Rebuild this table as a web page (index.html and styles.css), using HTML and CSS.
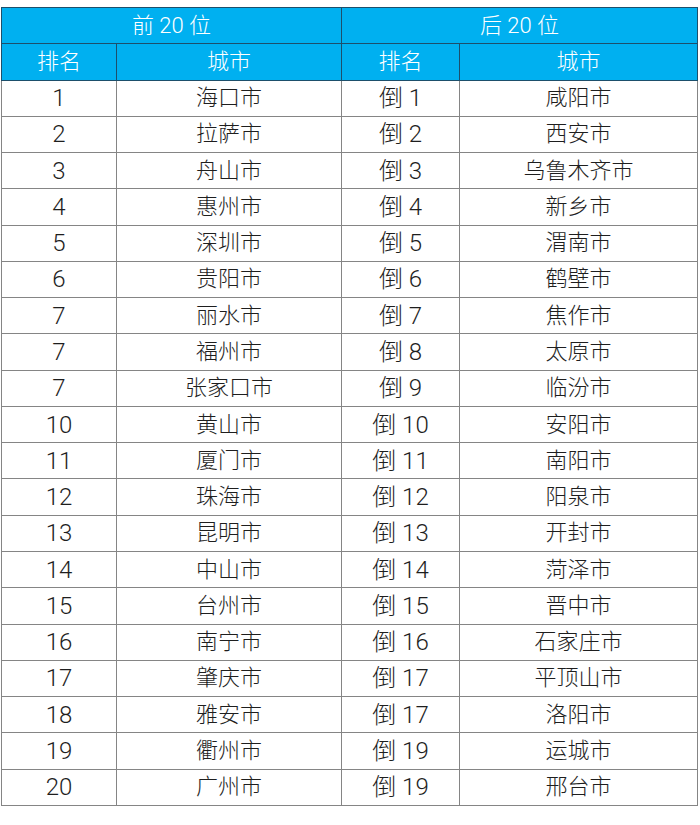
FILE: index.html
```html
<!DOCTYPE html>
<html lang="zh">
<head>
<meta charset="utf-8">
<link rel="stylesheet" href="styles.css">
</head>
<body>
<table class="rank">
<colgroup><col class="c1"><col class="c2"><col class="c3"><col class="c4"></colgroup>
<thead>
<tr class="h1"><th colspan="2">前 20 位</th><th colspan="2">后 20 位</th></tr>
<tr class="h2"><th>排名</th><th>城市</th><th>排名</th><th>城市</th></tr>
</thead>
<tbody>
<tr><td class="n">1</td><td>海口市</td><td class="n">倒 1</td><td>咸阳市</td></tr>
<tr><td class="n">2</td><td>拉萨市</td><td class="n">倒 2</td><td>西安市</td></tr>
<tr><td class="n">3</td><td>舟山市</td><td class="n">倒 3</td><td>乌鲁木齐市</td></tr>
<tr><td class="n">4</td><td>惠州市</td><td class="n">倒 4</td><td>新乡市</td></tr>
<tr><td class="n">5</td><td>深圳市</td><td class="n">倒 5</td><td>渭南市</td></tr>
<tr><td class="n">6</td><td>贵阳市</td><td class="n">倒 6</td><td>鹤壁市</td></tr>
<tr><td class="n">7</td><td>丽水市</td><td class="n">倒 7</td><td>焦作市</td></tr>
<tr><td class="n">7</td><td>福州市</td><td class="n">倒 8</td><td>太原市</td></tr>
<tr><td class="n">7</td><td>张家口市</td><td class="n">倒 9</td><td>临汾市</td></tr>
<tr><td class="n">10</td><td>黄山市</td><td class="n">倒 10</td><td>安阳市</td></tr>
<tr><td class="n">11</td><td>厦门市</td><td class="n">倒 11</td><td>南阳市</td></tr>
<tr><td class="n">12</td><td>珠海市</td><td class="n">倒 12</td><td>阳泉市</td></tr>
<tr><td class="n">13</td><td>昆明市</td><td class="n">倒 13</td><td>开封市</td></tr>
<tr><td class="n">14</td><td>中山市</td><td class="n">倒 14</td><td>菏泽市</td></tr>
<tr><td class="n">15</td><td>台州市</td><td class="n">倒 15</td><td>晋中市</td></tr>
<tr><td class="n">16</td><td>南宁市</td><td class="n">倒 16</td><td>石家庄市</td></tr>
<tr><td class="n">17</td><td>肇庆市</td><td class="n">倒 17</td><td>平顶山市</td></tr>
<tr><td class="n">18</td><td>雅安市</td><td class="n">倒 17</td><td>洛阳市</td></tr>
<tr><td class="n">19</td><td>衢州市</td><td class="n">倒 19</td><td>运城市</td></tr>
<tr><td class="n">20</td><td>广州市</td><td class="n">倒 19</td><td>邢台市</td></tr>
</tbody>
</table>
</body>
</html>
```
FILE: styles.css
```css
html, body {
  margin: 0;
  padding: 0;
  background: #ffffff;
}
.rank {
  margin: 7px 0 0 1px;
  width: 696px;
  border-collapse: collapse;
  table-layout: fixed;
  font-family: Roboto, "Noto Sans CJK SC", sans-serif;
  font-size: 22px;
  font-weight: 300;
  color: #1e1e1e;
}
.c1 { width: 115px; }
.c2 { width: 225px; }
.c3 { width: 118px; }
.c4 { width: 238px; }
.rank tr {
  height: 36.27px;
}
.rank th, .rank td {
  padding: 0;
  text-align: center;
  vertical-align: middle;
  line-height: 1;
  border: 1.5px solid #858585;
}
.rank th {
  background: #00b0f0;
  color: #ffffff;
  font-weight: 300;
  border-color: #1d4f6b;
}
.rank td.n {
  font-size: 24px;
}
```
